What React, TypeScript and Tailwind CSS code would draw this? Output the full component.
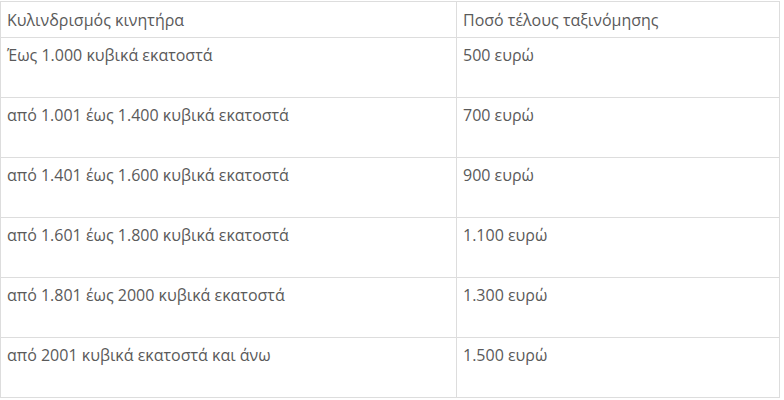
const rows = [
  ['Έως 1.000 κυβικά εκατοστά', '500 ευρώ'],
  ['από 1.001 έως 1.400 κυβικά εκατοστά', '700 ευρώ'],
  ['από 1.401 έως 1.600 κυβικά εκατοστά', '900 ευρώ'],
  ['από 1.601 έως 1.800 κυβικά εκατοστά', '1.100 ευρώ'],
  ['από 1.801 έως 2000 κυβικά εκατοστά', '1.300 ευρώ'],
  ['από 2001 κυβικά εκατοστά και άνω', '1.500 ευρώ'],
]

export default function App() {
  return (
    <div className="w-[784px] h-[400px] bg-white pt-px font-['Open_Sans',sans-serif] text-[16px] text-[#5a5a5a]">
      <table className="w-[780px] border-collapse border border-[#ddd] table-fixed">
        <colgroup>
          <col className="w-[456px]" />
          <col />
        </colgroup>
        <thead>
          <tr className="h-[36px]">
            <th className="border border-[#ddd] px-[6px] text-left font-normal align-middle leading-5">
              Κυλινδρισμός κινητήρα
            </th>
            <th className="border border-[#ddd] px-[6px] text-left font-normal align-middle leading-5">
              Ποσό τέλους ταξινόμησης
            </th>
          </tr>
        </thead>
        <tbody>
          {rows.map(([cc, fee]) => (
            <tr key={cc} className="h-[60px]">
              <td className="border border-[#ddd] px-[6px] pt-[7px] align-top leading-5">{cc}</td>
              <td className="border border-[#ddd] px-[6px] pt-[7px] align-top leading-5">{fee}</td>
            </tr>
          ))}
        </tbody>
      </table>
    </div>
  )
}
